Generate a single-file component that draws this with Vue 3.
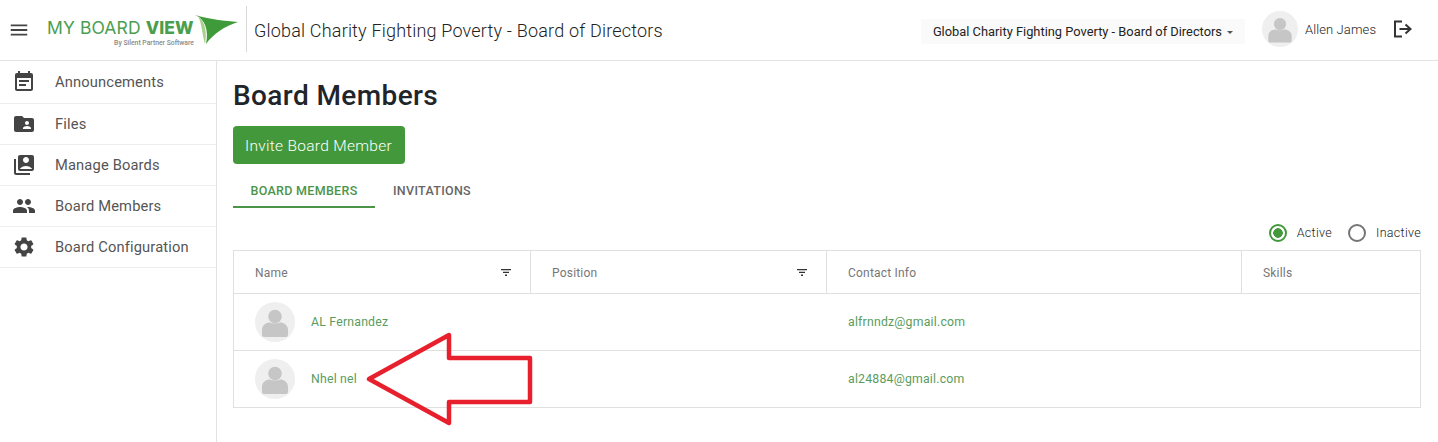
<script setup>
const nav = [
  { label: 'Announcements', d: 'M17 10H7v2h10v-2zm2-7h-1V1h-2v2H8V1H6v2H5c-1.11 0-1.99.9-1.99 2L3 19c0 1.1.89 2 2 2h14c1.1 0 2-.9 2-2V5c0-1.1-.9-2-2-2zm0 16H5V8h14v11zm-5-5H7v2h7v-2z' },
  { label: 'Files', d: 'M20 6h-8l-2-2H4c-1.1 0-1.99.9-1.99 2L2 18c0 1.1.9 2 2 2h16c1.1 0 2-.9 2-2V8c0-1.1-.9-2-2-2zm-5 3c1.1 0 2 .9 2 2s-.9 2-2 2-2-.9-2-2 .9-2 2-2zm4 8h-8v-1c0-1.33 2.67-2 4-2s4 .67 4 2v1z' },
  { label: 'Manage Boards', d: 'M4 6H2v14c0 1.1.9 2 2 2h14v-2H4V6zm16-4H8c-1.1 0-2 .9-2 2v12c0 1.1.9 2 2 2h12c1.1 0 2-.9 2-2V4c0-1.1-.9-2-2-2zm-6 2c1.66 0 3 1.34 3 3s-1.34 3-3 3-3-1.34-3-3 1.34-3 3-3zM7.76 16c1.47-1.83 3.71-3 6.24-3s4.77 1.17 6.24 3H7.76z' },
  { label: 'Board Members', d: 'M16 11c1.66 0 2.99-1.34 2.99-3S17.66 5 16 5c-1.66 0-3 1.34-3 3s1.34 3 3 3zm-8 0c1.66 0 2.99-1.34 2.99-3S9.66 5 8 5C6.34 5 5 6.34 5 8s1.34 3 3 3zm0 2c-2.33 0-7 1.17-7 3.5V19h14v-2.5c0-2.33-4.67-3.5-7-3.5zm8 0c-.29 0-.62.02-.97.05 1.16.84 1.97 1.97 1.97 3.45V19h6v-2.5c0-2.33-4.67-3.5-7-3.5z' },
  { label: 'Board Configuration', d: 'M19.14 12.94c.04-.3.06-.61.06-.94 0-.32-.02-.64-.07-.94l2.03-1.58c.18-.14.23-.41.12-.61l-1.92-3.32c-.12-.22-.37-.29-.59-.22l-2.39.96c-.5-.38-1.03-.7-1.62-.94l-.36-2.54c-.04-.24-.24-.41-.48-.41h-3.84c-.24 0-.43.17-.47.41l-.36 2.54c-.59.24-1.13.57-1.62.94l-2.39-.96c-.22-.08-.47 0-.59.22L2.74 8.87c-.12.21-.08.47.12.61l2.03 1.58c-.05.3-.09.63-.09.94s.02.64.07.94l-2.03 1.58c-.18.14-.23.41-.12.61l1.92 3.32c.12.22.37.29.59.22l2.39-.96c.5.38 1.03.7 1.62.94l.36 2.54c.05.24.24.41.48.41h3.84c.24 0 .44-.17.47-.41l.36-2.54c.59-.24 1.13-.56 1.62-.94l2.39.96c.22.08.47 0 .59-.22l1.92-3.32c.12-.22.07-.47-.12-.61l-2.01-1.58zM12 15.6c-1.98 0-3.6-1.62-3.6-3.6s1.62-3.6 3.6-3.6 3.6 1.62 3.6 3.6-1.62 3.6-3.6 3.6z' }
]
const columns = [
  { label: 'Name', filter: true, cls: 'c1' },
  { label: 'Position', filter: true, cls: 'c2' },
  { label: 'Contact Info', filter: false, cls: 'c3' },
  { label: 'Skills', filter: false, cls: 'c4' }
]
const members = [
  { name: 'AL Fernandez', email: 'alfrnndz@gmail.com' },
  { name: 'Nhel nel', email: 'al24884@gmail.com' }
]
</script>

<template>
  <div class="page">
    <header class="topbar">
      <svg class="menu" viewBox="0 0 24 24" width="22" height="22"><path d="M3 18h18v-2H3v2zm0-5h18v-2H3v2zm0-7v2h18V6H3z" /></svg>
      <div class="logo">
        <div class="logo-text">
          <div class="logo-main">MY BOARD <b>VIEW</b></div>
          <div class="logo-sub">By Silent Partner Software</div>
        </div>
        <svg class="logo-mark" viewBox="0 0 44 30" width="44" height="30">
          <path d="M0 1 C10 5 14 16 11 30 C18 20 30 12 43 8 C30 7 14 5 0 1Z" fill="#3f9a39" />
          <path d="M3 2 C11 8 12 20 10 30 C7 20 7 10 3 2Z" fill="#a9d18e" />
        </svg>
      </div>
      <div class="org-title">Global Charity Fighting Poverty - Board of Directors</div>
      <div class="org-select">Global Charity Fighting Poverty - Board of Directors<span class="caret"></span></div>
      <div class="avatar top-avatar">
        <svg viewBox="0 0 40 40"><circle cx="20" cy="14.5" r="6.8" /><path d="M7 33v-5c0-5 4-7.500 8-7.500 2 1.200 8 1.200 10 0 4 0 8 2.500 8 7.500v5c0 1.500-1 2-3 2H10c-2 0-3-.5-3-2z" /></svg>
      </div>
      <div class="user">Allen James</div>
      <svg class="logout" viewBox="0 0 20 18" width="20" height="18"><path d="M9 1.500H2v15h7M6.500 9H17M12.500 4.500 17.500 9l-5 4.500" fill="none" stroke="#333" stroke-width="2" /></svg>
    </header>

    <div class="body">
      <nav class="sidebar">
        <a v-for="item in nav" :key="item.label" class="nav-item">
          <svg viewBox="0 0 24 24" width="24" height="24"><path :d="item.d" /></svg>
          <span>{{ item.label }}</span>
        </a>
      </nav>

      <main class="content">
        <h1>Board Members</h1>
        <button class="invite">Invite Board Member</button>
        <div class="tabs">
          <div class="tab active">BOARD MEMBERS</div>
          <div class="tab">INVITATIONS</div>
        </div>
        <div class="radios">
          <label class="radio"><span class="dot on"></span>Active</label>
          <label class="radio"><span class="dot"></span>Inactive</label>
        </div>
        <div class="table">
          <div class="row head">
            <div v-for="c in columns" :key="c.label" class="cell" :class="c.cls">
              <span>{{ c.label }}</span>
              <svg v-if="c.filter" class="filter" viewBox="0 0 10 7" width="10" height="7"><path d="M0 0h10v1.300H0zM2 2.800h6v1.300H2zM4 5.600h2v1.300H4z" /></svg>
            </div>
          </div>
          <div v-for="m in members" :key="m.name" class="row member">
            <div class="cell c1">
              <div class="avatar">
                <svg viewBox="0 0 40 40"><circle cx="20" cy="14.500" r="6.800" /><path d="M7 33v-5c0-5 4-7.500 8-7.500 2 1.200 8 1.200 10 0 4 0 8 2.500 8 7.500v5c0 1.500-1 2-3 2H10c-2 0-3-.5-3-2z" /></svg>
              </div>
              <a class="link name">{{ m.name }}</a>
            </div>
            <div class="cell c2"></div>
            <div class="cell c3"><a class="link">{{ m.email }}</a></div>
            <div class="cell c4"></div>
          </div>
        </div>
      </main>
    </div>

    <svg class="arrow" viewBox="0 0 1438 442" width="1438" height="442">
      <path d="M369 379 449 335V358H530V402H449V423Z" fill="none" stroke="#e81f2c" stroke-width="4.500" stroke-linejoin="round" />
    </svg>
  </div>
</template>

<style scoped>
.page {
  position: relative;
  width: 1438px;
  height: 442px;
  overflow: hidden;
  background: #fff;
  font-family: Roboto, "Liberation Sans", sans-serif;
  color: #4a4a4a;
}
.topbar {
  height: 60px;
  border-bottom: 1px solid #e3e3e3;
  display: flex;
  align-items: center;
  box-sizing: content-box;
  padding-right: 25px;
}
.menu { margin-left: 8px; fill: #444; flex: none; }
.logo {
  display: flex;
  align-items: flex-start;
  margin-left: 17px;
  width: 199px;
  height: 46px;
  flex: none;
  margin-top: -1px;
}
.logo-text { width: 147px; padding-top: 11px; flex: none; }
.logo-main {
  font-family: Inter, sans-serif;
  font-size: 17.500px;
  line-height: 19px;
  color: #4b9e4f;
  white-space: nowrap;
  letter-spacing: .1px;
}
.logo-main b { font-weight: 800; }
.logo-sub {
  font-size: 6.800px;
  line-height: 8px;
  color: #8a8a8a;
  font-weight: 500;
  margin-top: 2px;
  text-align: right;
}
.logo-mark { margin: 7px 0 0 1px; flex: none; }
.org-title {
  height: 46px;
  margin-top: -2px;
  padding-left: 7px;
  border-left: 1px solid #d8d8d8;
  font-size: 18px;
  line-height: 50px;
  font-weight: 300;
  color: #222;
  letter-spacing: .19px;
  white-space: nowrap;
  flex: none;
}
.org-select {
  margin-left: auto;
  margin-top: 2px;
  height: 25px;
  line-height: 25px;
  padding: 0 12px;
  background: #fafafa;
  font-size: 12.850px;
  color: #222;
  white-space: nowrap;
}
.caret {
  display: inline-block;
  margin-left: 5px;
  vertical-align: 2px;
  border-left: 3.500px solid transparent;
  border-right: 3.500px solid transparent;
  border-top: 3.500px solid #555;
}
.avatar {
  width: 40px;
  height: 40px;
  border-radius: 50%;
  background: #efefef;
  overflow: hidden;
  flex: none;
}
.avatar svg { display: block; width: 100%; height: 100%; fill: #c6c6c6; }
.top-avatar { width: 36px; height: 36px; margin-left: 17px; margin-top: -2px; }
.user {
  margin-left: 7px;
  width: 71px;
  font-size: 13px;
  font-weight: 300;
  letter-spacing: .1px;
  color: #222;
  margin-top: -2px;
  white-space: nowrap;
}
.logout { margin-left: 17px; margin-top: -2px; flex: none; }

.body { display: flex; height: 381px; }
.sidebar {
  width: 216px;
  border-right: 1px solid #e3e3e3;
  flex: none;
  box-sizing: content-box;
}
.nav-item {
  display: flex;
  align-items: center;
  height: 40px;
  border-bottom: 1px solid #eeeeee;
  padding-left: 12px;
  font-size: 14.700px;
  font-weight: 400;
  letter-spacing: .15px;
  color: #555;
}
.nav-item:first-child { height: 42px; }
.nav-item svg { fill: #444; flex: none; margin-right: 19px; }

.content { flex: 1; padding: 0 17px 0 16px; min-width: 0; }
h1 {
  margin: 18px 0 0;
  font-size: 28px;
  line-height: 33px;
  font-weight: 500;
  letter-spacing: .4px;
  color: #212529;
}
.invite {
  display: block;
  margin-top: 14px;
  width: 172px;
  height: 38px;
  border: 0;
  border-radius: 4px;
  background: #43983c;
  color: #fff;
  font-family: inherit;
  font-size: 15.500px;
  font-weight: 300;
  letter-spacing: .3px;
  padding: 1px 1px 0 0;
}
.tabs { display: flex; margin-top: 12px; height: 32px; }
.tab {
  width: 142px;
  height: 32px;
  box-sizing: border-box;
  text-align: center;
  font-size: 12.500px;
  font-weight: 500;
  letter-spacing: .3px;
  line-height: 29px;
  color: #666;
}
.tab + .tab { width: 114px; }
.tab.active { color: #4c9548; border-bottom: 2px solid #4c9548; }
.radios {
  display: flex;
  justify-content: flex-end;
  gap: 16px;
  height: 18px;
  margin-top: 16px;
}
.radio {
  display: flex;
  align-items: center;
  font-size: 12.500px;
  font-weight: 300;
  letter-spacing: .3px;
  color: #222;
  gap: 10px;
  line-height: 18px;
}
.dot {
  width: 18px;
  height: 18px;
  box-sizing: border-box;
  border-radius: 50%;
  border: 2px solid #757575;
  display: block;
}
.dot.on {
  border-color: #43983c;
  background: radial-gradient(circle, #43983c 0 4.500px, transparent 5px);
}
.table {
  margin-top: 8px;
  border: 1px solid #e0e0e0;
  border-bottom: 0;
  font-size: 12px;
}
.row { display: flex; border-bottom: 1px solid #e0e0e0; }
.row.head { height: 43px; box-sizing: border-box; color: #777; }
.row.member { height: 57px; box-sizing: border-box; }
.cell {
  display: flex;
  align-items: center;
  padding-left: 21px;
  box-sizing: border-box;
  letter-spacing: .2px;
}
.c1 { width: 297px; }
.c2 { width: 296px; }
.c3 { width: 415px; }
.c4 { flex: 1; }
.head .cell { border-right: 1px solid #e0e0e0; font-size: 12px; padding-top: 1px; }
.head .c4 { border-right: 0; }
.filter { margin-left: auto; margin-right: 19px; fill: #333; flex: none; }
.member .avatar { margin-right: 16px; }
.link { color: #5a9c5e; font-size: 12.300px; letter-spacing: .2px; }
.arrow { position: absolute; left: 0; top: 0; pointer-events: none; }
</style>
